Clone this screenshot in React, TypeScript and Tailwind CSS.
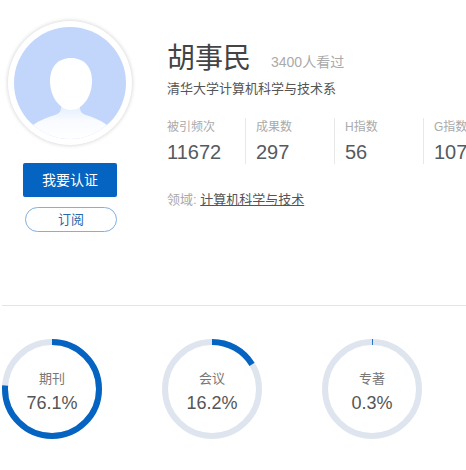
const stats = [
  { label: "被引频次", value: "11672" },
  { label: "成果数", value: "297" },
  { label: "H指数", value: "56" },
  { label: "G指数", value: "107" },
];

const rings = [
  { label: "期刊", value: "76.1%", pct: 76.1 },
  { label: "会议", value: "16.2%", pct: 16.2 },
  { label: "专著", value: "0.3%", pct: 0.3 },
];

const Avatar = () => (
  <div className="w-[124px] h-[124px] rounded-full bg-white p-[6px] shadow-[0_0_4px_rgba(0,0,0,0.2)]">
    <svg viewBox="0 0 112 112" className="w-[112px] h-[112px] block">
      <defs>
        <clipPath id="avatar-clip">
          <circle cx="56" cy="56" r="56" />
        </clipPath>
        <linearGradient id="body-fade" x1="0" y1="0" x2="0" y2="1">
          <stop offset="0" stopColor="#e6effd" />
          <stop offset="0.45" stopColor="#f9fbff" />
          <stop offset="1" stopColor="#ffffff" />
        </linearGradient>
        <filter id="soft" x="-10%" y="-10%" width="120%" height="120%">
          <feGaussianBlur stdDeviation="0.5" />
        </filter>
      </defs>
      <g clipPath="url(#avatar-clip)">
        <rect width="112" height="112" fill="#c1d6fa" />
        <path d="M19 98 C26 93 34 90 41 88 C45 86.5 47 85 47 80 L66 80 C66 85 68 86.5 72 88 C79 90 86 93 93 98 L93 112 L19 112 Z" fill="url(#body-fade)" filter="url(#soft)" />
        <path d="M57 31 C70 31 78 40 78 54 C78 70 68 83 57 83 C46 83 36 70 36 54 C36 40 44 31 57 31 Z" fill="#ffffff" filter="url(#soft)" />
      </g>
    </svg>
  </div>
);

const Ring = ({ label, value, pct }: { label: string; value: string; pct: number }) => {
  const r = 47;
  const c = 2 * Math.PI * r;
  return (
    <div className="relative w-[100px] h-[100px]">
      <svg viewBox="0 0 100 100" className="w-[100px] h-[100px] block -rotate-90">
        <circle cx="50" cy="50" r={r} fill="none" stroke="#dfe5ee" strokeWidth="6" />
        <circle
          cx="50"
          cy="50"
          r={r}
          fill="none"
          stroke="#0563c1"
          strokeWidth="6"
          strokeDasharray={`${(c * pct) / 100} ${c}`}
        />
      </svg>
      <div className="absolute inset-0 flex flex-col items-center pt-[31px]">
        <span className="text-[13px] leading-[18px] text-[#777]">{label}</span>
        <span className="text-[18px] leading-[24px] mt-[3px] text-[#555]">{value}</span>
      </div>
    </div>
  );
};

const App = () => {
  return (
    <div className="w-[466px] h-[470px] overflow-hidden bg-white font-['Liberation_Sans','Noto_Sans_CJK_SC',sans-serif]">
      <div className="flex h-[306px] ml-[2px] border-b border-[#e4e4e4]">
        <div className="w-[165px] shrink-0 flex flex-col pt-[21px] pl-[6px]">
          <Avatar />
          <button className="mt-[18px] ml-[15px] w-[94px] h-[34px] rounded-[2px] bg-[#0563c1] text-white text-[14px]">
            我要认证
          </button>
          <button className="mt-[10px] ml-[17px] w-[92px] h-[25px] rounded-full border border-[#7fb0e0] bg-white text-[#2a66ab] text-[13px] leading-none">
            订阅
          </button>
        </div>
        <div className="flex flex-col pt-[39px] w-[340px] shrink-0">
          <div className="flex items-end h-[40px]">
            <span className="text-[28px] leading-[40px] text-[#444]">胡事民</span>
            <span className="ml-[20px] mb-[7px] text-[14px] leading-[20px] text-[#aaa]">3400人看过</span>
          </div>
          <p className="text-[13px] leading-[20px] text-[#555]">清华大学计算机科学与技术系</p>
          <div className="flex mt-[19px]">
            {stats.map((s, i) => (
              <div
                key={s.label}
                className={`h-[46px] shrink-0 flex flex-col ${i < 3 ? "border-r border-[#e8e8e8]" : ""} ${i > 0 ? "w-[89px] pl-[10px]" : "w-[79px]"}`}
              >
                <span className="text-[12px] leading-[18px] text-[#aaa]">{s.label}</span>
                <span className="text-[20px] leading-[24px] mt-[4px] text-[#555a62]">{s.value}</span>
              </div>
            ))}
          </div>
          <p className="mt-[26px] text-[13px] leading-[20px] text-[#aaa]">
            领域: <span className="text-[#555] underline">计算机科学与技术</span>
          </p>
        </div>
      </div>
      <div className="flex gap-[60px] pl-[2px] pt-[33px]">
        {rings.map((r) => (
          <Ring key={r.label} {...r} />
        ))}
      </div>
    </div>
  );
};

export default App;
